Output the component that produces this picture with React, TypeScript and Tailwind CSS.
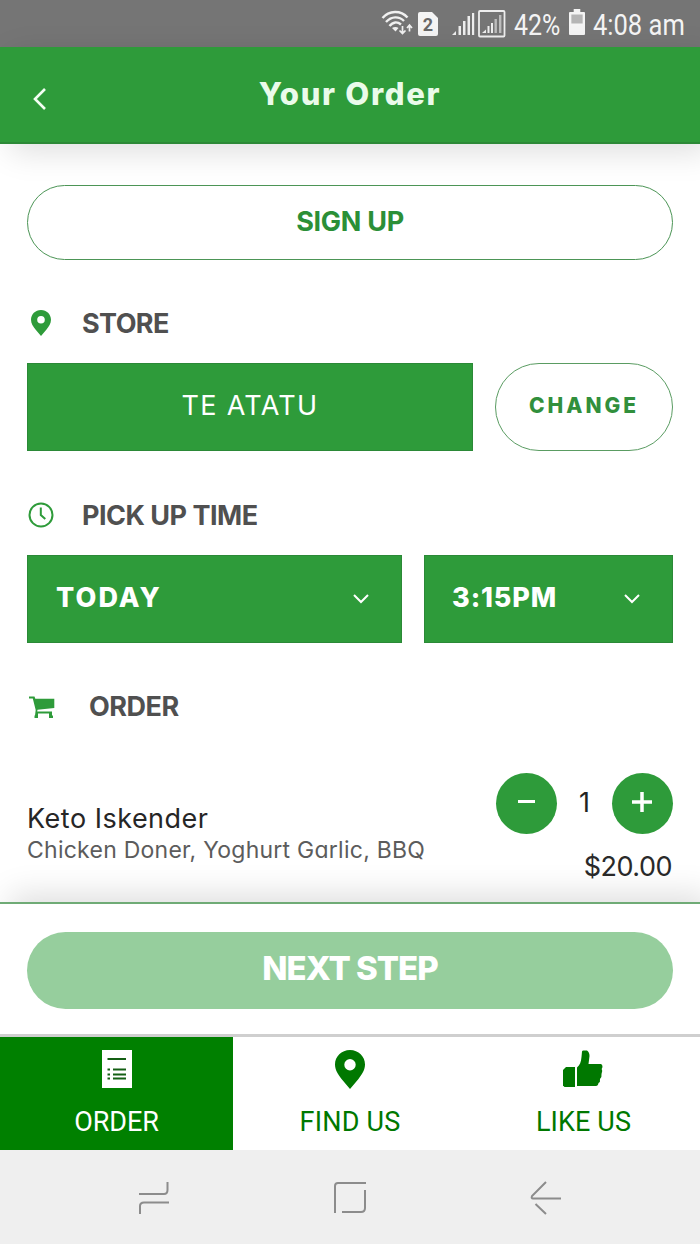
import type { ReactNode } from "react";

// Status bar icons
const WifiIcon = () => (
  <svg width="32" height="28" viewBox="0 0 32 28" fill="none" stroke="#f0f0f0" strokeWidth="2.4">
    <path d="M1.500 8 C8 0 20 0 26.500 7.500" />
    <path d="M5 12 C10.500 6 18 6 23 11" />
    <path d="M8.500 16 C12 11.500 16.500 11.500 20 14.500" />
    <path d="M11 18 L14.500 21.500 L17.500 18 C16 16.500 13 16.500 11 18 Z" fill="#f0f0f0" stroke="none" />
    <path d="M21.500 16 V23 M18.500 20.500 L21.500 23.500 L24.500 20.500 M28.500 21.500 V15.500 M26 18 L28.500 15 L31 18" strokeWidth="1.700" />
  </svg>
);

const SimIcon = () => (
  <svg width="21" height="24" viewBox="0 0 21 24">
    <path d="M2 0 H14 L20 6 V22 Q20 24 18 24 H2 Q0 24 0 22 V2 Q0 0 2 0 Z" fill="#f4f4f4" />
    <text x="10" y="18.500" textAnchor="middle" fontFamily="Roboto" fontSize="18" fontWeight="700" fill="#686868">2</text>
  </svg>
);

const SignalIcon = () => (
  <svg width="24" height="24" viewBox="0 0 24 24" fill="#eeeeee">
    <path d="M0 23 L4 19 V23 Z" />
    <rect x="6.500" y="14" width="2.500" height="9" />
    <rect x="11" y="9" width="2.500" height="14" />
    <rect x="15.500" y="4" width="2.500" height="19" />
    <rect x="20" y="1" width="2.200" height="22" />
  </svg>
);

const BoxedSignalIcon = () => (
  <svg width="28" height="28" viewBox="0 0 28 28">
    <rect x="1" y="1" width="25.500" height="25.500" rx="1" fill="none" stroke="#eeeeee" strokeWidth="1.800" />
    <g fill="#eeeeee">
      <path d="M4 23 L8 19.500 V23 Z" />
      <rect x="9.500" y="16" width="2" height="7" />
      <rect x="13" y="13" width="2" height="10" />
    </g>
    <g fill="#bdbdbd">
      <rect x="16.500" y="9" width="2.400" height="14" />
      <rect x="21" y="5" width="2.400" height="18" />
    </g>
  </svg>
);

const BatteryIcon = () => (
  <svg width="16" height="26" viewBox="0 0 17 26" preserveAspectRatio="none">
    <path d="M5 0 H12 V3 H16 Q17 3 17 4 V25 Q17 26 16 26 H1 Q0 26 0 25 V4 Q0 3 1 3 H5 Z" fill="#f4f4f4" />
    <rect x="2.500" y="5.500" width="12" height="9" fill="#b5b5b5" />
  </svg>
);

// Section icons
const PinIcon = ({ className }: { className: string }) => (
  <svg className={className} viewBox="0 0 20 26" preserveAspectRatio="none" fill="currentColor">
    <path fillRule="evenodd" d="M10 0 C4.300 0 0 4.300 0 9.700 C0 13.500 2.200 16.500 4.500 19.500 L10 26 L15.500 19.500 C17.800 16.500 20 13.500 20 9.700 C20 4.300 15.700 0 10 0 Z M10 6 A3.800 3.800 0 1 1 10 13.600 A3.800 3.800 0 1 1 10 6 Z" />
  </svg>
);

const ClockIcon = () => (
  <svg className="ml-px" width="26" height="26" viewBox="0 0 26 26" fill="none" stroke="currentColor" strokeWidth="2">
    <circle cx="13" cy="13" r="11.500" />
    <path d="M12.800 5.500 V13 L17.300 17" />
  </svg>
);

const CartIcon = () => (
  <svg width="26" height="23" viewBox="0 0 26 23" fill="currentColor">
    <path d="M0 .5 H5.500 L6.300 2.800 H25.300 V12 L8.500 13.800 L8.200 15.500 H23 V19.500 H24 V22 H20 V17.500 H9 V22 H5.500 V19.500 H6 L6.700 14 L3.800 2.500 H0 Z" />
  </svg>
);

const ChevronDown = () => (
  <svg width="16" height="10" viewBox="0 0 16 10" fill="none" stroke="white" strokeWidth="2">
    <path d="M1 1 L8 8 L15 1" />
  </svg>
);

// Tab icons
const ListIcon = () => (
  <svg width="30" height="38" viewBox="0 0 30 38">
    <rect width="30" height="38" fill="white" />
    <path d="M5.500 9 H24 M5.500 19.500 H8 M11 19.500 H24 M5.500 24.500 H8 M11 24.500 H24 M5.500 28.500 H8 M11 28.500 H24" stroke="#145f14" strokeWidth="1.800" />
  </svg>
);

const ThumbIcon = () => (
  <svg className="mr-[2px]" width="40" height="38" viewBox="0 0 40 38" fill="currentColor">
    <path d="M3 17 H12 V37 H1.500 L0 35.500 V20 Z" />
    <path d="M14 17.500 C17 15 18 12 18.500 7 L19 1.500 Q19.200 .5 20.500 .5 H24 Q26.500 2 26.500 6 L25.500 14 H38 Q39.500 14.500 39.500 17 L38.700 19 Q40 21 38.500 24 Q39 27 37 29 Q37.500 32 35.500 33 Q35 36 33 36 H14 Z" />
  </svg>
);

const SectionTitle = ({ icon, children }: { icon: ReactNode; children: ReactNode }) => (
  <h2 className="flex h-10 items-center text-[27px] font-bold leading-none text-[#505050]">
    <span className="flex w-[55px] shrink-0 text-[#2e9b3a]">{icon}</span>
    {children}
  </h2>
);

const Tab = ({ icon, label, active }: { icon: ReactNode; label: ReactNode; active?: boolean }) => (
  <button
    className={`flex flex-col items-center pt-[12px] font-[Roboto] text-[27px] leading-none ${
      active ? "bg-[#008000] text-white" : "bg-white text-[#007800]"
    }`}
  >
    <span className="flex h-[40px] items-center">{icon}</span>
    <span className="mt-[20px]">{label}</span>
  </button>
);

export default function App() {
  return (
    <div className="flex h-[1244px] w-[700px] flex-col overflow-hidden bg-white font-[Inter,sans-serif] [font-feature-settings:'cv11']">
      {/* Status bar */}
      <div className="flex h-[47px] shrink-0 items-center bg-[#757575] pl-[381px] font-[Roboto] text-[29px] leading-none text-[#f4f4f4]">
        <WifiIcon />
        <span className="ml-[5px]"><SimIcon /></span>
        <span className="ml-[13px]"><SignalIcon /></span>
        <span className="ml-[2px]"><BoxedSignalIcon /></span>
        <span className="ml-[8px] w-[55px] pt-[3px]">
          <span className="inline-block origin-left scale-x-[0.86]">42%</span>
        </span>
        <span className="-mt-[4px]"><BatteryIcon /></span>
        <span className="ml-[8px] w-[92px] whitespace-nowrap pt-[3px]">
          <span className="inline-block origin-left scale-x-[0.88]">4:08 am</span>
        </span>
      </div>

      {/* Header */}
      <header className="z-10 grid h-[97px] shrink-0 grid-cols-[80px_1fr_80px] border-b-2 border-[#2c8937] bg-[#2e9b3a] shadow-[10px_8px_30px_rgba(0,0,0,0.13)]">
        <button className="pl-[33px] pt-[8px]">
          <svg width="14" height="22" viewBox="0 0 14 22" fill="none" stroke="#f3fff3" strokeWidth="2.600">
            <path d="M12 1 L2 11 L12 21" />
          </svg>
        </button>
        <h1 className="pt-[31px] text-center text-[31px] font-extrabold leading-none text-[#eafbea]">
          <span className="tracking-[1.7px]">Your Order</span>
        </h1>
      </header>

      {/* Order details */}
      <main className="h-[758px] shrink-0 px-[27px] pt-[41px]">
        <button className="flex h-[75px] w-full items-center justify-center rounded-full border border-[#4c9556] pb-[1px] text-[27px] font-bold text-[#2b8f37]">
          <span className="tracking-[-0.3px]">SIGN UP</span>
        </button>

        <div className="mt-[43px]">
          <SectionTitle icon={<PinIcon className="ml-[4px] h-[26px] w-[20px]" />}>
            <span className="tracking-[-0.6px]">STORE</span>
          </SectionTitle>
        </div>
        <div className="mt-[20px] flex gap-[22px]">
          <div className="flex h-[88px] w-[446px] items-center justify-center border border-[#2b8937] bg-[#2e9b3a] pb-[1px] text-[27px] text-white">
            <span className="tracking-[1.3px]">TE ATATU</span>
          </div>
          <button className="h-[88px] flex-1 rounded-full border border-[#5a9c62] pb-[3px] text-[21px] font-extrabold text-[#318f3c]">
            <span className="tracking-[3px]">CHANGE</span>
          </button>
        </div>

        <div className="mt-[44px]">
          <SectionTitle icon={<ClockIcon />}>
            <span className="tracking-[-0.5px]">PICK UP TIME</span>
          </SectionTitle>
        </div>
        <div className="mt-[20px] flex gap-[22px] text-[27px] font-extrabold text-white">
          <button className="flex h-[88px] w-[375px] items-center justify-between border border-[#2b8937] bg-[#2e9b3a] pl-[28px] pr-[32px]">
            <span className="pb-[2px] tracking-[2.1px]">TODAY</span>
            <ChevronDown />
          </button>
          <button className="flex h-[88px] flex-1 items-center justify-between border border-[#2b8937] bg-[#2e9b3a] pl-[27px] pr-[32px]">
            <span className="pb-[2px] tracking-[0.9px]">3:15PM</span>
            <ChevronDown />
          </button>
        </div>

        <div className="mt-[43px]">
          <SectionTitle icon={<span className="ml-[2px] mt-[2px]"><CartIcon /></span>}>
            <span className="ml-[7px] tracking-[-0.5px]">ORDER</span>
          </SectionTitle>
        </div>

        <div className="mt-[47px] flex justify-between">
          <div className="pt-[32px]">
            <div className="text-[27px] leading-none text-[#262626]"><span className="tracking-[0.5px]">Keto Iskender</span></div>
            <div className="mt-[7px] whitespace-nowrap text-[23px] leading-none text-[#5c5c5c]"><span className="tracking-[0.25px]">Chicken Doner, Yoghurt Garlic, BBQ</span></div>
          </div>
          <div className="w-[177px]">
            <div className="flex items-center justify-between text-[27px] text-[#222]">
              <button className="flex size-[61px] items-start justify-center rounded-full bg-[#2e9b3a]">
                <svg className="mt-[27px]" width="17" height="3"><rect width="17" height="3" fill="white" /></svg>
              </button>
              <span>1</span>
              <button className="flex size-[61px] items-start justify-center rounded-full bg-[#2e9b3a]">
                <svg className="mt-[19px]" width="20" height="20" stroke="white" strokeWidth="3.500"><path d="M10 0 V20 M0 10 H20" /></svg>
              </button>
            </div>
            <div className="mt-[19px] pr-px text-right text-[27px] leading-none text-[#2a2a2a]"><span className="tracking-[-0.5px]">$20.00</span></div>
          </div>
        </div>
      </main>

      {/* Checkout */}
      <div className="z-10 h-[132px] shrink-0 border-t-2 border-[#6fab76] bg-white px-[27px] pt-[28px] shadow-[10px_-8px_30px_rgba(0,0,0,0.13)]">
        <button className="flex h-[77px] w-full items-center justify-center rounded-full bg-[#96ce9d] pb-[3px] text-[33px] font-extrabold text-white">
          <span className="tracking-[-1px]">NEXT STEP</span>
        </button>
      </div>

      {/* Tabs */}
      <nav className="z-20 grid h-[116px] shrink-0 grid-cols-[233px_234px_233px] border-t-[3px] border-[#cfcfcf]">
        <Tab active icon={<ListIcon />} label={<span className="tracking-[-0.1px]">ORDER</span>} />
        <Tab icon={<PinIcon className="h-[39px] w-[30px]" />} label={<span className="tracking-[0.2px]">FIND US</span>} />
        <Tab icon={<ThumbIcon />} label={<span className="tracking-[0.1px]">LIKE US</span>} />
      </nav>

      {/* System navigation */}
      <div className="z-20 flex h-[94px] shrink-0 items-center bg-[#efefef] pl-[138px] pt-[2px]">
        <svg width="32" height="34" viewBox="0 0 32 34" fill="none" stroke="#8c8c8c" strokeWidth="2">
          <path d="M1 13 H26 Q29.500 13 29.500 9 V1 M31 21.500 H6 Q2 21.500 2 25 V33" />
        </svg>
        <svg className="ml-[163px]" width="34" height="34" viewBox="0 0 34 34" fill="none" stroke="#8c8c8c" strokeWidth="2">
          <path d="M2 32 V5 Q2 2 5 2 H33 M9 31 H28 Q32 31 32 27 V9" />
        </svg>
        <svg className="ml-[163px]" width="32" height="34" viewBox="0 0 32 34" fill="none" stroke="#8c8c8c" strokeWidth="2">
          <path d="M16 1 L2 15 Q1 17.500 3 17.500 H31 M5.500 23 L16 33" />
        </svg>
      </div>
    </div>
  );
}
